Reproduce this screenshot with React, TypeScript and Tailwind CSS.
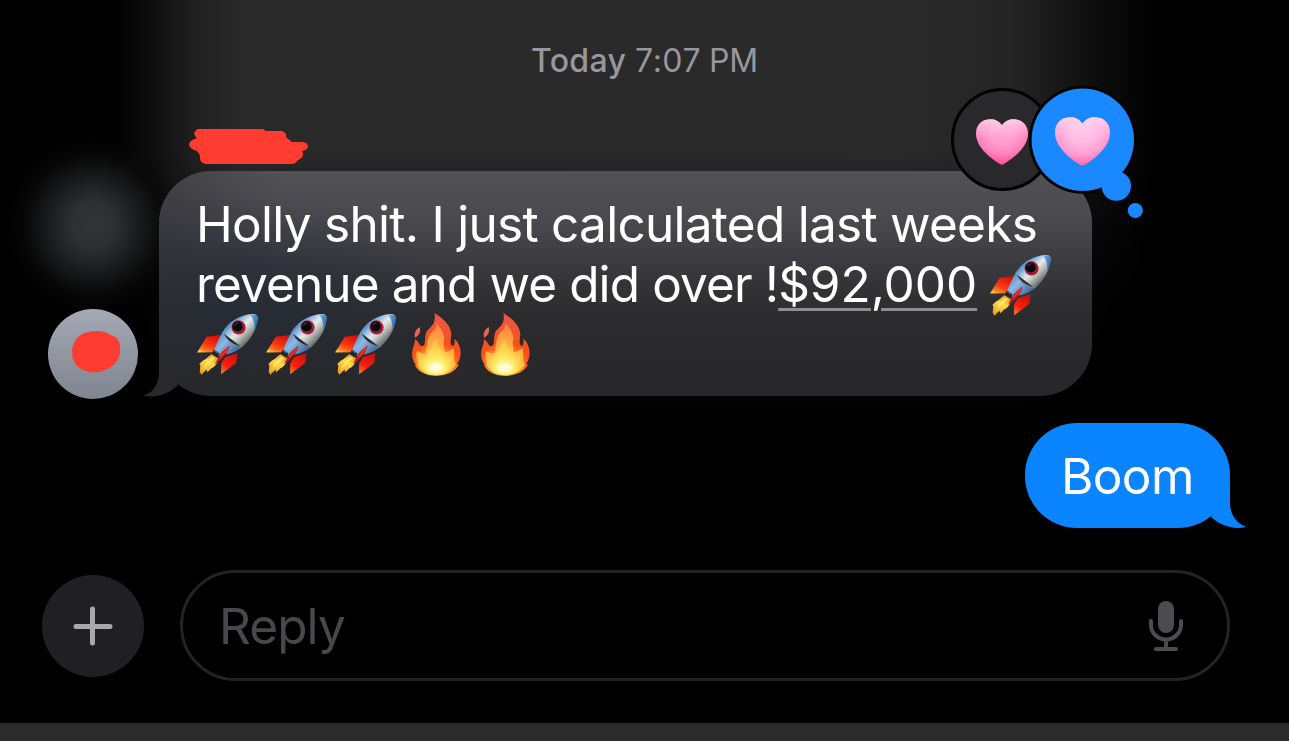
function Rocket({ className }: { className?: string }) {
    return (
        <svg viewBox="0 0 182 182" className={className}>
            <defs>
                <linearGradient id="rocketBody" x1="0.22" y1="0.2" x2="0.78" y2="0.72">
                    <stop offset="0" stopColor="#3e78b6" />
                    <stop offset="0.25" stopColor="#8fb9e0" />
                    <stop offset="0.5" stopColor="#e9ebe9" />
                    <stop offset="0.75" stopColor="#b4b8b4" />
                    <stop offset="1" stopColor="#6c7474" />
                </linearGradient>
                <linearGradient id="rocketBase" x1="0" y1="0" x2="1" y2="0.8">
                    <stop offset="0" stopColor="#3c78bb" />
                    <stop offset="0.45" stopColor="#8cb8e4" />
                    <stop offset="1" stopColor="#2f5685" />
                </linearGradient>
                <linearGradient id="rocketNose" x1="0" y1="0" x2="1" y2="0.7">
                    <stop offset="0" stopColor="#87b9e6" />
                    <stop offset="1" stopColor="#1c65ae" />
                </linearGradient>
                <linearGradient id="finLeft" x1="0.75" y1="0.1" x2="0.2" y2="1">
                    <stop offset="0" stopColor="#d9100a" />
                    <stop offset="0.55" stopColor="#fa3a10" />
                    <stop offset="0.85" stopColor="#fb7d22" />
                    <stop offset="1" stopColor="#fdc850" />
                </linearGradient>
                <linearGradient id="finRight" x1="0.7" y1="0" x2="0.2" y2="1">
                    <stop offset="0" stopColor="#c8100e" />
                    <stop offset="0.65" stopColor="#fb1f10" />
                    <stop offset="1" stopColor="#fa7b24" />
                </linearGradient>
                <linearGradient id="exhaust" x1="0.8" y1="0" x2="0.2" y2="1">
                    <stop offset="0" stopColor="#e08c18" />
                    <stop offset="0.45" stopColor="#ffdc45" />
                    <stop offset="1" stopColor="#f09a1c" />
                </linearGradient>
            </defs>
            <path d="M29 68 77 62 60 92 49 114 0 115Z" fill="url(#finLeft)" />
            <path d="M94 125 121 116 117 146 72 180 72 148 84 128Z" fill="url(#finRight)" />
            <path d="M43 119 66 131C61 145 54 158 43 162L31 174 28 166 13 181 8 172 10 154 7 149 16 140 26 134Z" fill="url(#exhaust)" />
            <path d="M45 126 26 147 17 168 35 149 55 132Z" fill="#fff07a" opacity="0.7" />
            <path d="M76 55C90 25 128 2 166 0Q180-1 181 12C178 48 159 78 134 99Z" fill="url(#rocketBody)" />
            <path d="M158 2C168 0 177-1 180 6 183 18 178 35 172 47 171 28 169 14 158 2Z" fill="url(#rocketNose)" />
            <path d="M77 53C87 79 108 94 135 98 121 112 101 119 82 121L66 125 50 110C57 90 67 71 77 53Z" fill="url(#rocketBase)" />
            <path d="M105 68 120 76 128 67 113 57Z" fill="#c8dcec" opacity="0.35" />
            <path d="M77 53C87 79 108 94 135 98" fill="none" stroke="#7e9fae" strokeWidth="2" />
            <path d="M51 106 67 117 62 131 43 119Z" fill="#20292f" />
            <path d="M52 108 63 116" stroke="#60747c" strokeWidth="4" />
            <path d="M97 94C94 113 81 131 53 149 64 132 66 119 80 108Z" fill="#c91612" />
            <path d="M93 102 70 128" stroke="#ff6954" strokeWidth="2.5" />
            <ellipse cx="124" cy="40" rx="21" ry="21" fill="#c3142c" />
            <ellipse cx="124" cy="40" rx="17" ry="17" fill="#782d3c" />
            <ellipse cx="121" cy="37" rx="15.500" ry="15" fill="#08090c" />
            <path d="M112 34Q116 26 124 26" fill="none" stroke="#484b53" strokeWidth="3" />
        </svg>
    );
}

function Fire({ className }: { className?: string }) {
    return (
        <svg viewBox="0 0 146 188" className={className}>
            <defs>
                <radialGradient id="fireOuter" cx="70" cy="162" r="150" gradientUnits="userSpaceOnUse">
                    <stop offset="0" stopColor="#ffe85a" />
                    <stop offset="0.25" stopColor="#ffa528" />
                    <stop offset="0.5" stopColor="#f9501a" />
                    <stop offset="1" stopColor="#ec5747" />
                </radialGradient>
                <radialGradient id="fireInner" cx="70" cy="160" r="125" gradientUnits="userSpaceOnUse">
                    <stop offset="0" stopColor="#fffef0" />
                    <stop offset="0.2" stopColor="#fff06a" />
                    <stop offset="0.5" stopColor="#ffb23c" />
                    <stop offset="1" stopColor="#fd8144" />
                </radialGradient>
                <radialGradient id="fireCore">
                    <stop offset="0" stopColor="#fffff5" />
                    <stop offset="0.4" stopColor="#fffbc0" />
                    <stop offset="1" stopColor="#ffe94b" stopOpacity="0" />
                </radialGradient>
            </defs>
            <path d="M23 42C26 57 22 67 9 74 5 62 11 49 23 42Z" fill="#e96750" />
            <path d="M67 0C86 13 114 31 117 61 118 73 113 82 116 91 120 104 130 99 126 77 140 87 148 110 144 130 142 141 138 148 134 152L140 154C132 173 107 187 72 187 37 187 14 172 8 154L13 157C3 145-2 130 1 113 3 99 10 92 8 78 21 84 21 97 29 99 43 99 36 76 42 59 47 42 74 41 67 0Z" fill="url(#fireOuter)" />
            <path d="M71 29C91 49 94 62 97 76 91 91 98 103 97 117 114 115 117 108 124 104 128 125 122 143 132 153 119 174 97 184 70 184 40 184 22 169 16 154 20 147 8 137 15 112 25 121 34 121 40 119 46 101 43 78 55 62 65 50 75 48 71 29Z" fill="url(#fireInner)" />
            <path d="M71 75C79 97 79 102 87 116 94 128 91 136 95 143 106 134 110 135 115 125 120 148 106 174 70 182 40 175 26 158 26 137 34 142 40 147 45 137 50 119 51 104 71 75Z" fill="#ffe75c" opacity="0.4" />
            <ellipse cx="70" cy="163" rx="43" ry="29" fill="url(#fireCore)" />
        </svg>
    );
}

function Heart({ className, light }: { className?: string; light?: boolean }) {
    const id = light ? "heartLight" : "heartDark";
    return (
        <svg viewBox="0 0 156 140" preserveAspectRatio="none" className={className}>
            <defs>
                <radialGradient id={id} cx="0.5" cy="0.3" r="0.72">
                    <stop offset="0" stopColor={light ? "#ffc0e6" : "#ff9dcd"} />
                    <stop offset="0.3" stopColor={light ? "#ffbce4" : "#ffa0d0"} />
                    <stop offset="0.65" stopColor={light ? "#ff9fd2" : "#ff82bd"} />
                    <stop offset="1" stopColor={light ? "#fd62ac" : "#fb4795"} />
                </radialGradient>
                <linearGradient id={`${id}Top`} x1="0" y1="0" x2="0" y2="1">
                    <stop offset="0" stopColor="#ffe0f4" stopOpacity="0.75" />
                    <stop offset="0.45" stopColor="#ffd0ec" stopOpacity="0" />
                </linearGradient>
            </defs>
            <path d="M78 19C88 5 101 0 116 1 140 2 156 20 156 45 156 83 118 116 84 137Q78 141 72 137C38 116 0 83 0 45 0 20 16 2 40 1 55 0 68 5 78 19Z" fill={`url(#${id})`} />
            <path d="M78 19C88 5 101 0 116 1 140 2 156 20 156 45 156 83 118 116 84 137Q78 141 72 137C38 116 0 83 0 45 0 20 16 2 40 1 55 0 68 5 78 19Z" fill={`url(#${id}Top)`} />
        </svg>
    );
}

function Tapbacks() {
    return (
        <div className="absolute left-[792px] top-[-85px] h-[133px] w-[193px]">
            <div className="absolute left-0 top-[2px] flex size-[103px] items-center justify-center rounded-full border-[3px] border-black bg-[#29292b]">
                <Heart className="h-[46px] w-[52px] translate-x-[-1px] translate-y-[2px]" />
            </div>
            <svg viewBox="0 0 193 133" className="absolute inset-0 size-full">
                <circle cx="131.8" cy="53.8" r="54" fill="#000" />
                <circle cx="131.8" cy="53.8" r="51.2" fill="#1a88ff" />
                <circle cx="165.3" cy="100" r="14.7" fill="#1a88ff" />
                <circle cx="184.3" cy="124.5" r="7.5" fill="#1a88ff" />
            </svg>
            <Heart light className="absolute left-[104px] top-[31px] h-[49px] w-[55px]" />
        </div>
    );
}

function ReceivedBubble() {
    return (
        <div className="relative h-[225px] w-[933px] rounded-[52px] bg-[radial-gradient(ellipse_200px_110px_at_10%_58%,rgba(34,42,56,0.6),transparent),radial-gradient(ellipse_120px_200px_at_0%_20%,rgba(45,45,50,0.5),transparent),linear-gradient(180deg,#525156_0%,#4a494e_22%,#38373c_45%,#2b2b2d_65%,#272729_100%)] pt-[23px] pl-[37px]">
            <svg viewBox="0 0 40 54" className="absolute bottom-[-1px] left-[-17px] h-[54px] w-10">
                <path d="M17 0V28C17 42 10 51 1 52.500 15 56 28 50 36 42Z" fill="#29292c" />
            </svg>
            <div className="h-[60px] text-[49.5px] leading-[60px] tracking-[-0.73px] whitespace-nowrap text-white">
                Holly shit. I just calculated last weeks
            </div>
            <div className="flex h-[60px] text-[49.5px] leading-[60px] tracking-[-0.88px] whitespace-nowrap text-white">
                <span>revenue and we did over !</span>
                <span className="tracking-[-0.05px] underline decoration-[#8e8e91] decoration-[3px] underline-offset-[6px]">$92,000</span>
                <Rocket className="ml-[13px] size-[61px] translate-y-px" />
            </div>
            <div className="flex h-[61px] pl-px">
                <Rocket className="mr-2 size-[61px]" />
                <Rocket className="mr-2 size-[61px]" />
                <Rocket className="size-[61px]" />
                <Fire className="ml-[16px] h-[63px] w-[49px] -translate-y-px" />
                <Fire className="ml-[20px] h-[63px] w-[49px] -translate-y-px" />
            </div>
            <Tapbacks />
        </div>
    );
}

export default function App() {
    return (
        <div className="relative isolate flex h-[741px] w-[1289px] flex-col overflow-hidden bg-black font-[Inter,sans-serif]">
            <div className="absolute inset-x-0 top-0 -z-10 h-[470px] bg-[linear-gradient(90deg,transparent_115px,#0d0d0d_150px,#1f1f20_192px,#29292a_240px,#2a2a2b_900px,#252526_1010px,#101010_1085px,transparent_1155px)] [mask-image:linear-gradient(180deg,black_150px,rgba(0,0,0,0.75)_200px,rgba(0,0,0,0.15)_300px,transparent_450px)]" />
            <div className="absolute left-[5px] top-[135px] -z-10 h-[180px] w-[176px] bg-[radial-gradient(closest-side,#333538_0%,#2d2f31_25%,#1a1b1c_52%,rgba(10,10,11,0.7)_78%,transparent_100%)]" />

            <div className="flex h-[129px] justify-center pt-[40px] text-[32px] leading-[42px] text-[#98979d]">
                <span className="font-medium tracking-[0.3px]">Today</span>
                <span className="ml-[9px] tracking-[0.5px]">7:07</span>
                <span className="ml-[8px] tracking-[-0.2px]">PM</span>
            </div>

            <svg viewBox="0 0 120 42" className="ml-[188px] h-[42px] w-[120px] shrink-0">
                <path d="M10 0H75L78 2H94Q99 4 98 8L104 13H115Q120 14 120 17 120 21 114 22H114Q117 27 112 30L109 32Q108 35 103 35H18Q11 34 12 26L9 22Q1 20 1 15 2 11 9 9 3 4 10 0Z" fill="#ff3c32" />
            </svg>

            <div className="flex h-[228px] pl-12">
                <div className="mr-[21px] flex size-[90px] items-center justify-center self-end rounded-full bg-linear-to-b from-[#a4a9b5] to-[#7f858f]">
                    <svg viewBox="0 0 48 42" className="ml-[5px] mb-[4px] h-[42px] w-[48px]">
                        <path d="M16 1Q24-1 33 1L43 6Q49 10 48 18 49 29 39 36 28 43 17 41 4 38 1 28-1 21 1 14 5 3 16 1Z" fill="#ff3c32" />
                    </svg>
                </div>
                <ReceivedBubble />
            </div>

            <div className="mt-6 flex justify-end pr-[59px]">
                <div className="relative h-[105px] w-[205px] rounded-[52px] bg-[#0a84ff] pt-[23px] pl-[36px] text-[49.5px] leading-[60px] tracking-[-0.6px] text-white">
                    Boom
                    <svg viewBox="0 0 40 54" className="absolute right-[-17px] bottom-[-1px] h-[54px] w-10">
                        <path d="M23 0V28C23 41 31 49 39 52 25 55 13 50 4 42Z" fill="#0a84ff" />
                    </svg>
                </div>
            </div>

            <div className="mt-[42px] flex items-center pl-[42px]">
                <button className="flex size-[102px] items-center justify-center rounded-full bg-[#202022]">
                    <svg viewBox="0 0 40 40" className="size-10">
                        <path d="M19.500 3V37M3 20.500H37" stroke="#a9a9ac" strokeWidth="5" strokeLinecap="round" />
                    </svg>
                </button>
                <div className="ml-[36px] flex h-[111px] w-[1050px] items-center justify-between rounded-full border-[3px] border-[#232324] pr-[43px] pl-[36px]">
                    <span className="translate-y-px text-[49.5px] tracking-[-0.9px] text-[#48484b]">Reply</span>
                    <svg viewBox="0 0 36 52" className="h-[52px] w-[36px]" fill="none" stroke="#4c4c4f" strokeWidth="4" strokeLinecap="round">
                        <rect x="10" y="1" width="16" height="32" rx="8" fill="#4c4c4f" stroke="none" />
                        <path d="M3 21V25A15 14.500 0 0 0 33 25V21M18 40V48M8 49H28" />
                    </svg>
                </div>
            </div>

            <div className="mt-auto h-[18px] bg-[#2b2b2c]" />
        </div>
    );
}
